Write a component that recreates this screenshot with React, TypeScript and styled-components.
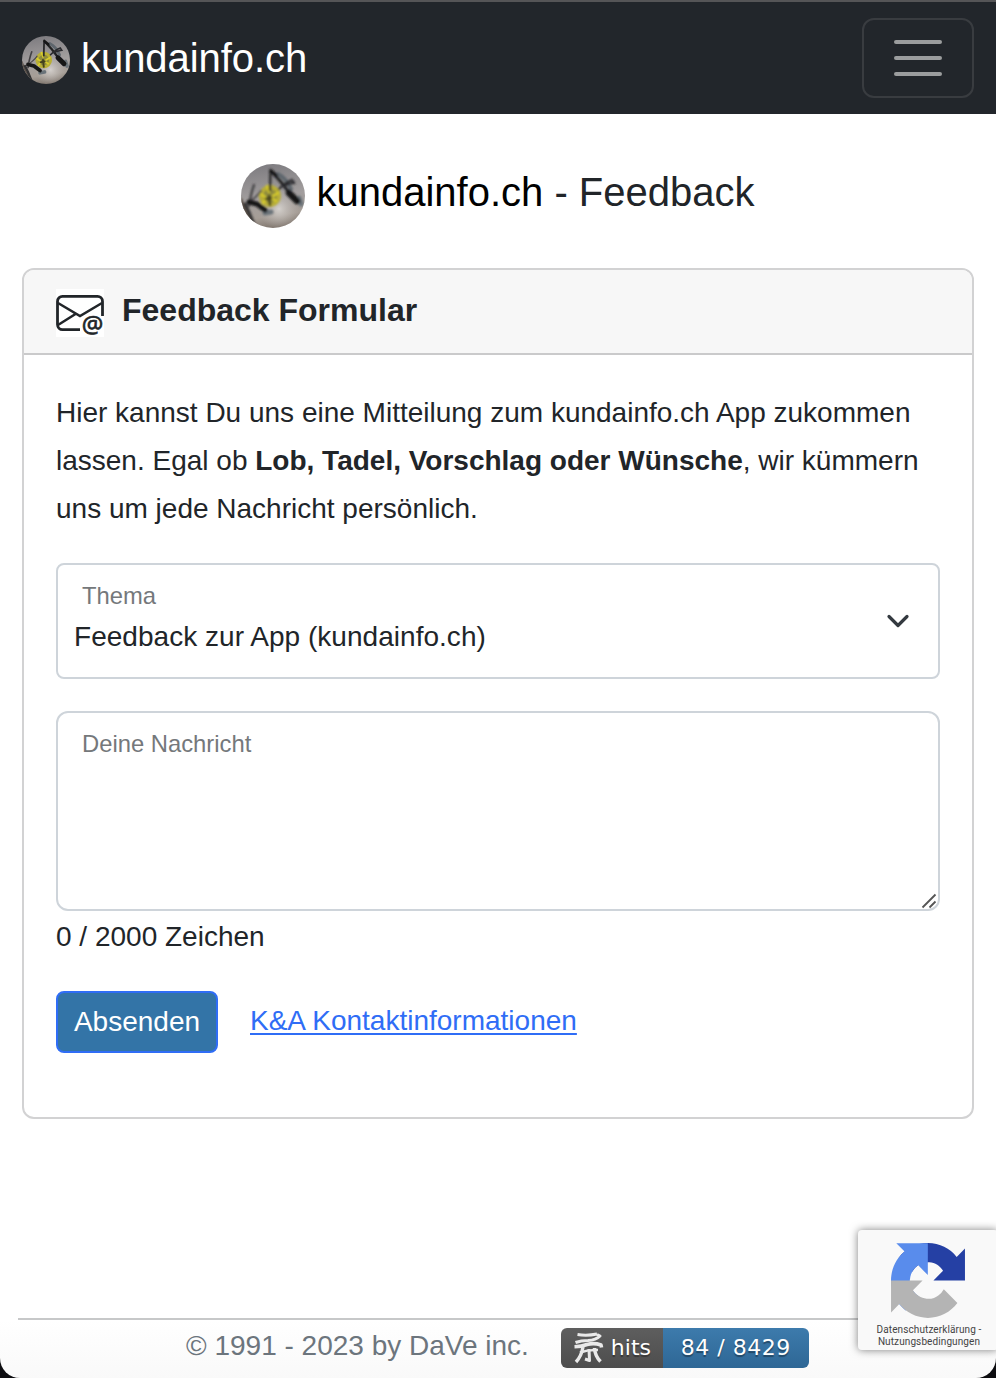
import React from 'react';
import styled, { createGlobalStyle } from 'styled-components';

const GlobalStyle = createGlobalStyle`
  * { box-sizing: border-box; }
  html { background: #0d0d10; }
  body { margin: 0; }
  h1, h2, p { margin: 0; font-weight: 400; }
`;

const Page = styled.div`
  height: 1378px;
  overflow: hidden;
  display: flex;
  flex-direction: column;
  position: relative;
  font-family: 'Liberation Sans', Arial, sans-serif;
  font-size: 28px;
  color: #212529;
  background: linear-gradient(#fff 0, #fff 1320px, #f9f9f9 1378px);
  border-radius: 0 0 20px 20px;
`;

const Navbar = styled.header`
  height: 114px;
  flex: none;
  display: flex;
  align-items: center;
  justify-content: space-between;
  padding: 0 22px;
  background: #22262b;
  border-top: 2px solid #555557;
`;

const Brand = styled.a`
  display: flex;
  align-items: center;
  gap: 11px;
  padding-top: 4px;
  color: #fff;
  font-size: 40px;
  line-height: 48px;
`;

const BrandName = styled.span`
  margin-top: -4px;
  letter-spacing: -0.05px;
`;

const Toggler = styled.button`
  width: 112px;
  height: 80px;
  padding: 0 0 0 2px;
  display: flex;
  flex-direction: column;
  align-items: center;
  justify-content: center;
  gap: 12px;
  background: transparent;
  border: 2px solid #393c40;
  border-radius: 12px;
`;

const TogglerBar = styled.span`
  width: 48px;
  height: 4px;
  margin-left: -2px;
  border-radius: 2px;
  background: #9b9d9e;
`;

const Title = styled.h1`
  margin-top: 50px;
  height: 64px;
  flex: none;
  display: flex;
  justify-content: center;
  gap: 11px;
  font-size: 40px;
  line-height: 56px;
  white-space: pre;
`;

const TitleBrand = styled.span`
  color: #000;
`;

const Card = styled.section`
  margin: 40px 22px 0;
  height: 851px;
  flex: none;
  border: 2px solid #d2d2d3;
  border-radius: 12px;
  overflow: hidden;
  background: #fff;
`;

const CardHeader = styled.header`
  height: 85px;
  display: flex;
  align-items: flex-start;
  gap: 18px;
  padding: 19px 32px 0;
  background: #f7f7f7;
  border-bottom: 2px solid #cacacb;
`;

const CardTitle = styled.h2`
  font-size: 32px;
  line-height: 42px;
  font-weight: 700;
`;

const CardBody = styled.div`
  padding: 34px 32px 0;
`;

const Intro = styled.p`
  line-height: 48px;
  white-space: nowrap;
`;

const Field = styled.div<{ $height: number; $radius: number }>`
  position: relative;
  height: ${(p) => p.$height}px;
  border: 2px solid #ced4da;
  border-radius: ${(p) => p.$radius}px;
  padding: 16px 24px 0;
  background: #fff;
`;

const SelectField = styled(Field)`
  margin-top: 30px;
  display: flex;
  justify-content: space-between;
`;

const MessageField = styled(Field)`
  margin-top: 32px;
`;

const FieldLabel = styled.div`
  font-size: 23.8px;
  line-height: 30px;
  color: #75787b;
`;

const FieldValue = styled.div`
  margin: 8px 0 0 -8px;
  line-height: 36px;
  letter-spacing: 0.03px;
`;

const Chevron = styled.svg`
  margin: 32px 4px 0 0;
`;

const ResizeGrip = styled.svg`
  position: absolute;
  right: 1px;
  bottom: 0;
`;

const Counter = styled.div`
  margin-top: 6px;
  line-height: 40px;
`;

const Actions = styled.div`
  margin-top: 34px;
  display: flex;
  align-items: center;
  gap: 32px;
`;

const SubmitButton = styled.button`
  width: 162px;
  height: 62px;
  padding: 0;
  font: inherit;
  color: #fff;
  background: #3374a7;
  border: 2px solid #2f6df6;
  border-radius: 8px;
`;

const ContactLink = styled.a`
  color: #2f6df6;
  line-height: 40px;
  margin-top: -2px;
  text-decoration: underline;
  text-decoration-thickness: 2px;
  text-underline-offset: 3px;
  text-decoration-skip-ink: none;
`;

const Footer = styled.footer`
  margin: auto 18px 0;
  height: 60px;
  flex: none;
  display: flex;
  align-items: flex-start;
  gap: 32px;
  padding: 8px 0 0 168px;
  border-top: 2px solid #c7c8c9;
  color: #6c757d;
`;

const Copyright = styled.span`
  line-height: 36px;
`;

const Badge = styled.div`
  display: flex;
  width: 248px;
  height: 40px;
  border-radius: 6px;
  overflow: hidden;
  color: #fff;
  font-family: 'DejaVu Sans', Verdana, sans-serif;
  font-size: 22px;
  line-height: 40px;
  text-shadow: 0 2px 1px rgba(1, 1, 1, 0.35);
`;

const BadgeLabel = styled.div`
  width: 102px;
  display: flex;
  align-items: center;
  gap: 6px;
  padding-left: 12px;
  background: linear-gradient(#5e5e5e, #4d4d4d);
`;

const BadgeCount = styled.div`
  flex: 1;
  padding-left: 18px;
  letter-spacing: 0.5px;
  white-space: nowrap;
  background: linear-gradient(#3d7bac, #2e6795);
`;

const Recaptcha = styled.aside`
  position: absolute;
  left: 858px;
  top: 1230px;
  width: 140px;
  height: 120px;
  padding-top: 13px;
  background: #f9f9f9;
  border-radius: 4px;
  box-shadow: 0 0 9px rgba(0, 0, 0, 0.5);
  display: flex;
  flex-direction: column;
  align-items: center;
  font-family: Roboto, sans-serif;
  font-size: 10px;
  line-height: 12px;
  color: #444;
  text-align: center;
  white-space: nowrap;
`;

const RecaptchaLinks = styled.div`
  margin-top: 6px;
  padding-left: 2px;
  letter-spacing: 0.1px;
`;

function Avatar({ size, id }: { size: number; id: string }) {
  return (
    <svg width={size} height={size} viewBox="0 0 64 64">
      <defs>
        <linearGradient id={`${id}-bg`} x1="0.45" y1="0" x2="0.6" y2="1">
          <stop offset="0" stopColor="#7f7d81" />
          <stop offset="0.5" stopColor="#a29e9e" />
          <stop offset="0.8" stopColor="#a69e97" />
          <stop offset="1" stopColor="#7d736b" />
        </linearGradient>
        <radialGradient id={`${id}-light`}>
          <stop offset="0" stopColor="#d4d0cc" />
          <stop offset="1" stopColor="#bbb5b0" stopOpacity="0" />
        </radialGradient>
        <clipPath id={`${id}-clip`}><circle cx="32" cy="32" r="32" /></clipPath>
        <filter id={`${id}-soft`}><feGaussianBlur stdDeviation="0.9" /></filter>
      </defs>
      <g clipPath={`url(#${id}-clip)`}>
        <rect width="64" height="64" fill={`url(#${id}-bg)`} />
        <circle cx="38" cy="45" r="20" fill={`url(#${id}-light)`} />
        <g filter={`url(#${id}-soft)`} fill="none" strokeLinecap="round">
          <path d="M-1 36Q4 52 14 62" stroke="#5b5149" strokeWidth="5" />
          <circle cx="29" cy="32" r="9" fill="#8f8b3c" stroke="#b8ae35" strokeWidth="4" strokeDasharray="5 1.5" />
          <path d="M20 30l4 3M26 22l2 6M37 29l-5 3M22 39l3-4M35 37l-3-2" stroke="#d8cd2c" strokeWidth="2.2" />
          <path d="M28 32l1 9M25 35l5-1" stroke="#45431f" strokeWidth="2.6" />
          <path d="M37 10Q45 14 50 25" stroke="#5e666d" strokeWidth="4" />
          <path d="M29.5 6L29 26" stroke="#29292b" strokeWidth="2.4" />
          <path d="M31 8L40 18L50 31" stroke="#202124" strokeWidth="3" />
          <path d="M30 7l5 4" stroke="#171719" strokeWidth="3.5" />
          <path d="M38 25Q45 18 51 16L53 19Q46 20 43 22" stroke="#2b2b2e" strokeWidth="2.2" />
          <path d="M58 34l2 6" stroke="#6a7379" strokeWidth="5" />
          <path d="M48 29l8 8" stroke="#151618" strokeWidth="6.5" />
          <path d="M13 21Q10 29 8 42" stroke="#424143" strokeWidth="2.2" />
          <path d="M20 27Q16 33 5 40" stroke="#4b484a" strokeWidth="1.8" />
          <path d="M24 49l6-1" stroke="#6a7379" strokeWidth="5" />
          <path d="M8 38l8 2 8 6" stroke="#161719" strokeWidth="5" />
          <path d="M4 40l4 8 4 10" stroke="#303033" strokeWidth="3" />
        </g>
      </g>
    </svg>
  );
}

function MailIcon() {
  return (
    <svg width="48" height="48" viewBox="0 0 48 48" fill="none" stroke="#212529" strokeWidth="2.8" overflow="visible">
      <rect width="48" height="48" fill="#fff" stroke="none" />
      <path d="M24 40.6H6.5a5 5 0 0 1-5-5V12.4a5 5 0 0 1 5-5h35a5 5 0 0 1 5 5V27" />
      <path d="M2 14l22 13 22-13M2 36l17.5-11" strokeWidth="2.6" />
      <text x="25.7" y="44.2" fill="#212529" stroke="#212529" strokeWidth="0.7" fontFamily="Open Sans, sans-serif" fontSize="24">@</text>
    </svg>
  );
}

function HitsIcon() {
  return (
    <svg width="32" height="32" viewBox="0 0 32 32" fill="none" stroke="#e9e9e9" strokeWidth="3" strokeLinejoin="round">
      <path d="M4.5 2.5Q14 4 24 2" />
      <path d="M24 2.5L27 4Q23 8 15 8.5Q8 8.5 2.5 10.5" />
      <path d="M1.5 14.8Q9 14.5 14 12.5Q21 10.5 28 13L28.5 15.5" strokeWidth="3.6" />
      <path d="M7 20.5Q15 17.5 25 18" strokeWidth="2.6" />
      <path d="M10 15Q8.5 24 3 30" strokeWidth="3.4" />
      <path d="M16 17L16.5 28.5L12 27" />
      <path d="M21.5 16Q22 24 27.5 29.5" strokeWidth="3.6" />
    </svg>
  );
}

function RecaptchaLogo() {
  return (
    <svg width="74" height="75" viewBox="0 0 64 64" preserveAspectRatio="none">
      <path fill="#2540a4" d="M64 31.955l-.033-1.37V4.687l-7.16 7.16C50.948 4.674 42.033.093 32.05.093c-10.4 0-19.622 4.96-25.458 12.64l11.736 11.86a15.55 15.55 0 0 1 4.754-5.334c2.05-1.6 4.952-2.906 8.968-2.906.485 0 .86.057 1.135.163 4.976.393 9.288 3.14 11.828 7.124l-8.307 8.307L64 31.953" />
      <path fill="#598cec" d="M31.862.094l-1.37.033H4.594l7.16 7.16C4.58 13.147 0 22.06 0 32.046c0 10.4 4.96 19.622 12.64 25.458L24.5 45.768a15.56 15.56 0 0 1-5.334-4.754c-1.6-2.05-2.906-4.952-2.906-8.968 0-.485.057-.86.163-1.135.393-4.976 3.14-9.288 7.124-11.828l8.307 8.307L31.86.095" />
      <path fill="#b4b4b4" d="M.001 32.045l.033 1.37v25.898l7.16-7.16c5.86 7.173 14.774 11.754 24.76 11.754 10.4 0 19.622-4.96 25.458-12.64l-11.736-11.86a15.55 15.55 0 0 1-4.754 5.334c-2.05 1.6-4.952 2.906-8.968 2.906-.485 0-.86-.057-1.135-.163-4.976-.393-9.288-3.14-11.828-7.124l8.307-8.307c-10.522.04-22.4.066-27.295-.005" />
    </svg>
  );
}

export default function App() {
  return (
    <Page>
      <GlobalStyle />
      <Navbar>
        <Brand>
          <Avatar size={48} id="nav" />
          <BrandName>kundainfo.ch</BrandName>
        </Brand>
        <Toggler aria-label="Menü">
          <TogglerBar />
          <TogglerBar />
          <TogglerBar />
        </Toggler>
      </Navbar>

      <Title>
        <Avatar size={64} id="title" />
        <span><TitleBrand>kundainfo.ch</TitleBrand> - Feedback</span>
      </Title>

      <Card>
        <CardHeader>
          <MailIcon />
          <CardTitle>Feedback Formular</CardTitle>
        </CardHeader>
        <CardBody>
          <Intro>
            Hier kannst Du uns eine Mitteilung zum kundainfo.ch App zukommen<br />
            lassen. Egal ob <b>Lob, Tadel, Vorschlag oder Wünsche</b>, wir kümmern<br />
            uns um jede Nachricht persönlich.
          </Intro>
          <SelectField $height={116} $radius={8}>
            <div>
              <FieldLabel>Thema</FieldLabel>
              <FieldValue>Feedback zur App (kundainfo.ch)</FieldValue>
            </div>
            <Chevron width="24" height="16" viewBox="0 0 24 16" fill="none" stroke="#343a40" strokeWidth="3.2" strokeLinecap="round" strokeLinejoin="round">
              <path d="M3 3.5l9 9 9-9" />
            </Chevron>
          </SelectField>
          <MessageField $height={200} $radius={12}>
            <FieldLabel>Deine Nachricht</FieldLabel>
            <ResizeGrip width="16" height="16" viewBox="0 0 16 16" stroke="#555" strokeWidth="1.8">
              <path d="M1.5 14.5L14.5 1.5M8.5 14.5L14.5 8.5" />
            </ResizeGrip>
          </MessageField>
          <Counter>0 / 2000 Zeichen</Counter>
          <Actions>
            <SubmitButton>Absenden</SubmitButton>
            <ContactLink>K&amp;A Kontaktinformationen</ContactLink>
          </Actions>
        </CardBody>
      </Card>

      <Footer>
        <Copyright>© 1991 - 2023 by DaVe inc.</Copyright>
        <Badge>
          <BadgeLabel><HitsIcon />hits</BadgeLabel>
          <BadgeCount>84 / 8429</BadgeCount>
        </Badge>
      </Footer>

      <Recaptcha>
        <RecaptchaLogo />
        <RecaptchaLinks>Datenschutzerklärung -<br />Nutzungsbedingungen</RecaptchaLinks>
      </Recaptcha>
    </Page>
  );
}
